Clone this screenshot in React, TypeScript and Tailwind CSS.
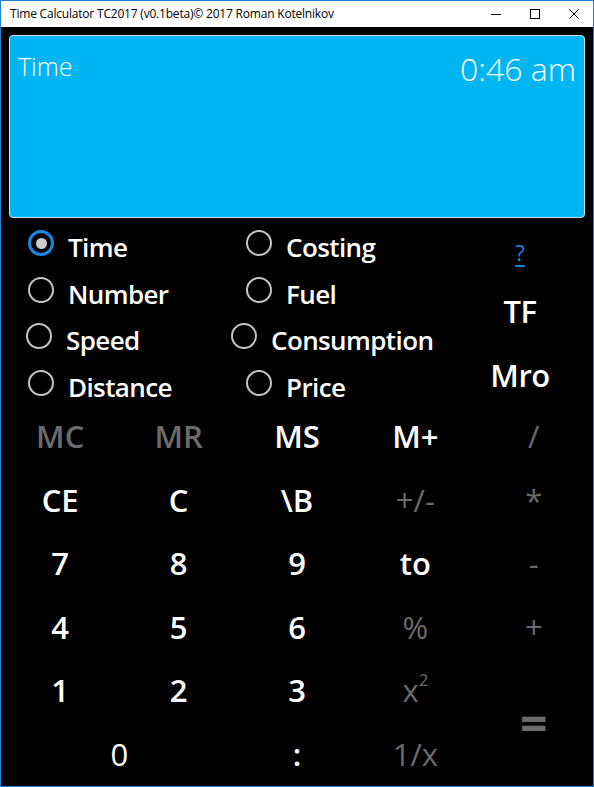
const sans = "font-['Open_Sans','Noto_Sans',sans-serif]";

function Radio({ label, checked = false, pad }: { label: string; checked?: boolean; pad: string }) {
  return (
    <div className={`flex items-center ${pad}`}>
      {checked ? (
        <span className="-mt-[8px] flex size-[26px] shrink-0 items-center justify-center rounded-full border-[3px] border-[#1a86e0]">
          <span className="size-[11px] rounded-full bg-[#cccccc]" />
        </span>
      ) : (
        <span className="-mt-[8px] size-[26px] shrink-0 rounded-full border-2 border-[#c4c4c4]" />
      )}
      <span className="ml-[14px] text-[26px] font-semibold leading-none tracking-[-0.6px] text-white">{label}</span>
    </div>
  );
}

function Key({ label, dim = false, className = '' }: { label: React.ReactNode; dim?: boolean; className?: string }) {
  return (
    <div
      className={`flex items-center justify-center text-[31px] leading-none ${
        dim ? 'text-[#6b6b6b]' : 'text-white'
      } ${className}`}
    >
      {label}
    </div>
  );
}

export default function App() {
  return (
    <div className={`flex h-[787px] w-[594px] flex-col overflow-hidden border border-[#1b7fd6] bg-black ${sans}`}>
      {/* Title bar */}
      <div className="flex h-[26px] shrink-0 items-center bg-white">
        <span className="ml-[9px] flex-1 text-[12px] tracking-[-0.2px] text-black">
          Time Calculator TC2017 (v0.1beta)© 2017 Roman Kotelnikov
        </span>
        <div className="flex h-full">
          <div className="flex w-[39px] items-center justify-center">
            <svg width="10" height="10" viewBox="0 0 10 10">
              <path d="M0 5.5h10" stroke="#000" strokeWidth="1" />
            </svg>
          </div>
          <div className="flex w-[39px] items-center justify-center">
            <svg width="10" height="10" viewBox="0 0 10 10">
              <rect x="0.5" y="0.5" width="9" height="9" fill="none" stroke="#000" strokeWidth="1" />
            </svg>
          </div>
          <div className="flex w-[39px] items-center justify-center">
            <svg width="10" height="10" viewBox="0 0 10 10">
              <path d="M0.5 0.5l9 9M9.5 0.5l-9 9" stroke="#000" strokeWidth="1" />
            </svg>
          </div>
        </div>
      </div>

      {/* Display */}
      <div className="mx-[8px] mt-[8px] flex h-[183px] shrink-0 items-start justify-between rounded-[4px] border border-[#cfe3ec] bg-[#01b4f2] px-[8px] pt-[12px]">
        <span className="text-[25px] font-light text-white">Time</span>
        <span className="-mt-[3px] text-[32px] font-light text-white">0:46 am</span>
      </div>

      {/* Modes */}
      <div className="flex h-[187px] shrink-0">
        <div className="grid w-[230px] grid-rows-[repeat(4,46.5px)] pt-[6px]">
          <Radio label="Time" checked pad="pl-[27px]" />
          <Radio label="Number" pad="pl-[27px]" />
          <Radio label="Speed" pad="pl-[25px]" />
          <Radio label="Distance" pad="pl-[27px]" />
        </div>
        <div className="grid w-[230px] grid-rows-[repeat(4,46.5px)] pt-[6px]">
          <Radio label="Costing" pad="pl-[15px]" />
          <Radio label="Fuel" pad="pl-[15px]" />
          <Radio label="Consumption" pad="pl-0" />
          <Radio label="Price" pad="pl-[15px]" />
        </div>
        <div className="flex w-[118px] flex-col items-center">
          <div className="flex h-[68px] items-center">
            <span className="text-[22px] text-[#1a86e0] underline underline-offset-4">?</span>
          </div>
          <div className="flex h-[50px] items-center">
            <span className="text-[31px] font-semibold tracking-[-0.5px] text-white">TF</span>
          </div>
          <div className="mt-[19px] flex h-[40px] items-center">
            <span className="text-[31px] font-semibold tracking-[-0.5px] text-white">Mro</span>
          </div>
        </div>
      </div>

      {/* Keypad */}
      <div className="grid h-[381px] shrink-0 grid-cols-5 grid-rows-6">
        <Key label="MC" dim className="font-semibold" />
        <Key label="MR" dim className="font-semibold" />
        <Key label="MS" className="font-semibold" />
        <Key label="M+" className="font-semibold" />
        <Key label="/" dim className="font-medium" />

        <Key label="CE" className="font-semibold" />
        <Key label="C" className="font-semibold" />
        <Key label="\B" className="font-semibold" />
        <Key label="+/-" dim className="font-medium" />
        <Key label="*" dim className="font-medium" />

        <Key label="7" className="font-semibold" />
        <Key label="8" className="font-semibold" />
        <Key label="9" className="font-semibold" />
        <Key label="to" className="font-semibold" />
        <Key label="-" dim className="font-medium" />

        <Key label="4" className="font-semibold" />
        <Key label="5" className="font-semibold" />
        <Key label="6" className="font-semibold" />
        <Key label="%" dim className="font-medium" />
        <Key label="+" dim className="font-medium" />

        <Key label="1" className="font-semibold" />
        <Key label="2" className="font-semibold" />
        <Key label="3" className="font-semibold" />
        <Key
          label={
            <span className="flex items-start">
              x<span className="-mt-[4px] text-[17px]">2</span>
            </span>
          }
          dim
          className="font-medium"
        />
        <Key label="=" dim className="row-span-2 text-[48px] font-bold" />

        <Key label="0" className="col-span-2 font-medium" />
        <Key label=":" className="font-semibold" />
        <Key label="1/x" dim className="font-medium" />
      </div>
    </div>
  );
}
